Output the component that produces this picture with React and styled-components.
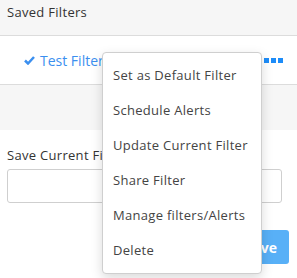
import React from "react";
import styled, { createGlobalStyle } from "styled-components";

const GlobalStyle = createGlobalStyle`
  body {
    margin: 0;
    background: #fff;
    font-family: "Open Sans", "Liberation Sans", sans-serif;
  }
`;

const Page = styled.div`
  position: relative;
  width: 297px;
  height: 278px;
  overflow: hidden;
  color: #333;
  font-size: 13px;
  letter-spacing: 0.3px;
`;

const Header = styled.div`
  height: 36px;
  padding: 3px 7px 0;
  box-sizing: border-box;
  background: #f6f6f6;
  border-bottom: 1px solid #dcdcdc;
`;

const FilterRow = styled.div`
  display: flex;
  align-items: center;
  justify-content: space-between;
  height: 48px;
  padding: 0 14px 0 24px;
  border-bottom: 1px solid #dcdcdc;
`;

const FilterName = styled.span`
  display: flex;
  align-items: center;
  gap: 5px;
  color: #3b8fef;
  font-size: 14px;
  letter-spacing: 0;
`;

const Dots = styled.span`
  display: flex;
  gap: 2px;

  i {
    width: 5px;
    height: 5px;
    background: #1d8cf8;
  }
`;

const Spacer = styled.div`
  height: 45px;
  background: #f6f6f6;
`;

const Form = styled.div`
  padding: 16px 15px 0 7px;
`;

const Label = styled.div`
  margin-bottom: 5px;
`;

const Input = styled.input`
  display: block;
  width: 100%;
  height: 34px;
  box-sizing: border-box;
  border: 1px solid #cfcfcf;
  border-radius: 3px;
`;

const Actions = styled.div`
  display: flex;
  justify-content: flex-end;
  margin: 27px -7px 0 0;
`;

const SaveButton = styled.button`
  height: 34px;
  padding: 0 12px;
  border: none;
  border-radius: 3px;
  background: #58b0f7;
  color: #fff;
  font: 700 14px "Open Sans", "Liberation Sans", sans-serif;
`;

const Menu = styled.ul`
  position: absolute;
  top: 52px;
  left: 102px;
  width: 160px;
  margin: 0;
  padding: 5px 0;
  list-style: none;
  background: #fff;
  border: 1px solid #cfcfcf;
  border-radius: 4px;
  box-shadow: 0 4px 12px rgba(0, 0, 0, 0.15);
  box-sizing: border-box;
`;

const MenuItem = styled.li`
  height: 35px;
  line-height: 35px;
  padding-left: 10px;
  color: #444;
  white-space: nowrap;
`;

const menuItems = [
  "Set as Default Filter",
  "Schedule Alerts",
  "Update Current Filter",
  "Share Filter",
  "Manage filters/Alerts",
  "Delete",
];

const Check = () => (
  <svg width="11" height="9" viewBox="0 0 11 9">
    <path d="M1 4.5 L4 7.5 L10 1" fill="none" stroke="#3b8fef" strokeWidth="2.5" />
  </svg>
);

export default function App() {
  return (
    <>
      <GlobalStyle />
      <Page>
        <Header>Saved Filters</Header>
        <FilterRow>
          <FilterName>
            <Check />
            Test Filter
          </FilterName>
          <Dots>
            <i />
            <i />
            <i />
          </Dots>
        </FilterRow>
        <Spacer />
        <Form>
          <Label>Save Current Filter</Label>
          <Input />
          <Actions>
            <SaveButton>Save</SaveButton>
          </Actions>
        </Form>
        <Menu>
          {menuItems.map(item => (
            <MenuItem key={item}>{item}</MenuItem>
          ))}
        </Menu>
      </Page>
    </>
  );
}
